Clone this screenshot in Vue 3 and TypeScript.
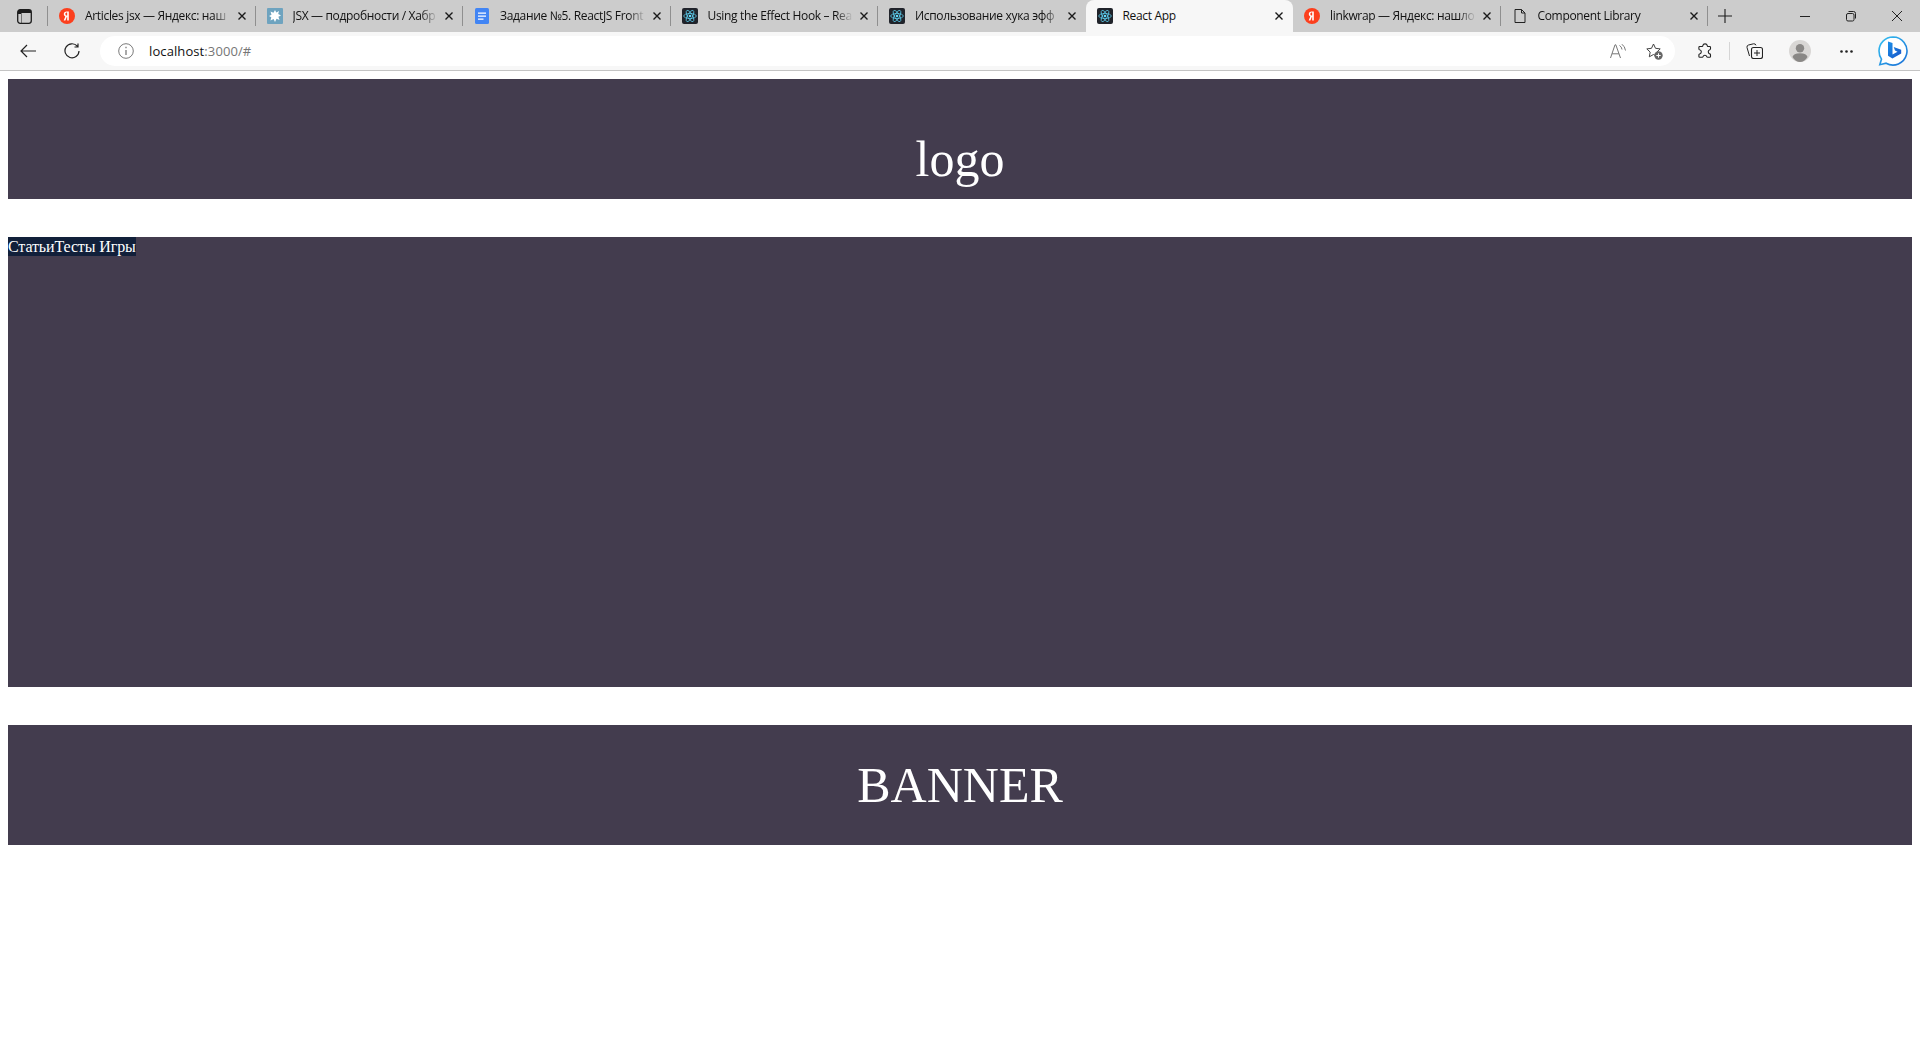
<template>
  <div class="browser">
    <div class="tabstrip">
      <button class="tab-actions" aria-label="tabs">
        <svg width="15" height="15" viewBox="0 0 15 15"><rect x=".7" y=".7" width="13.600" height="13.600" rx="2.500" fill="none" stroke="#1c1c1c" stroke-width="1.300" /><path d="M1 1h13v3H1zM1 4h3.500v10H4V5H1z" fill="#1c1c1c" /></svg>
      </button>
      <div
        v-for="tab in tabs"
        :key="tab.title"
        class="tab"
        :class="{ active: tab.active, 'no-sep': tab.noSep }"
      >
        <svg v-if="tab.icon === 'ya'" class="fav" viewBox="0 0 16 16"><circle cx="8" cy="8" r="8" fill="#fc3f1d" /><path d="M9 3.400H7.700C5.900 3.400 4.800 4.500 4.800 6c0 1.200.5 1.900 1.500 2.500L4.700 12.600h1.700l1.500-3.900h.3v3.900H9.800V3.400zM8.200 7.500h-.4C6.900 7.500 6.400 7 6.400 6c0-1 .5-1.500 1.400-1.500h.4z" fill="#fff" /></svg>
        <svg v-else-if="tab.icon === 'habr'" class="fav" viewBox="0 0 16 16"><rect width="16" height="16" rx="1" fill="#6ea3bf" /><path d="M8 2l1.300 2.600L12 3l-.8 3L14 7.600l-2.600 1.200L12.500 12 9.500 10.800 8 14l-1.400-3L3.500 12.500l.8-3.300L2 8l2.500-1.300L3.500 3.500l3 1.200z" fill="#fff" /></svg>
        <svg v-else-if="tab.icon === 'doc'" class="fav" viewBox="0 0 16 16"><rect x="1" width="14" height="16" rx="1.500" fill="#4285f4" /><path d="M4 4.500h8v1.300H4zM4 7.500h8v1.300H4zM4 10.500h5.500v1.300H4z" fill="#fff" /></svg>
        <svg v-else-if="tab.icon === 'react'" class="fav" viewBox="0 0 16 16">
          <rect width="16" height="16" rx="2" fill="#20232a" />
          <circle cx="8" cy="8" r="1.300" fill="#61dafb" />
          <g fill="none" stroke="#61dafb" stroke-width=".7">
            <ellipse cx="8" cy="8" rx="6.300" ry="2.500" />
            <ellipse cx="8" cy="8" rx="6.300" ry="2.500" transform="rotate(60 8 8)" />
            <ellipse cx="8" cy="8" rx="6.300" ry="2.500" transform="rotate(120 8 8)" />
          </g>
        </svg>
        <svg v-else class="fav" viewBox="0 0 16 16"><path d="M3 1.500h6.500L13 5v9.500H3z M9.500 1.500V5H13" fill="none" stroke="#222" stroke-width="1" /></svg>
        <span class="tab-title">{{ tab.title }}</span>
        <svg class="tab-close" width="10" height="10" viewBox="0 0 10 10"><path d="M1.500 1.500l7 7M8.500 1.500l-7 7" stroke="#1a1a1a" stroke-width="1.400" /></svg>
      </div>
      <div class="new-tab">
        <svg width="14" height="14" viewBox="0 0 14 14"><path d="M7 0v14M0 7h14" stroke="#1c1c1c" stroke-width="1.100" /></svg>
      </div>
      <div class="window-buttons">
        <svg width="46" height="32" viewBox="0 0 46 32"><path d="M18 16.500h10" stroke="#222" /></svg>
        <svg width="46" height="32" viewBox="0 0 46 32"><rect x="18.500" y="13.500" width="7.500" height="7.500" rx="1.500" fill="none" stroke="#222" /><path d="M20.500 11.500h5q2 0 2 2v5" fill="none" stroke="#222" /></svg>
        <svg width="46" height="32" viewBox="0 0 46 32"><path d="M18 11l10 10M28 11l-10 10" stroke="#222" /></svg>
      </div>
    </div>

    <div class="toolbar">
      <svg class="back" width="16" height="14" viewBox="0 0 16 14"><path d="M16 7H1M7 1L1 7l6 6" fill="none" stroke="#222" stroke-width="1.200" /></svg>
      <svg class="reload" width="16" height="16" viewBox="0 0 16 16"><path d="M13.300 3.200A7 7 0 1 0 15 8M14 .5v3.500h-3.500" fill="none" stroke="#222" stroke-width="1.200" /></svg>
      <div class="address">
        <svg width="16" height="16" viewBox="0 0 16 16"><circle cx="8" cy="8" r="7.300" fill="none" stroke="#7a7a7a" /><path d="M8 7v5M8 3.800v1.500" stroke="#7a7a7a" stroke-width="1.300" /></svg>
        <span class="url">localhost<span class="url-dim">:3000/#</span></span>
        <svg class="addr-end" width="16" height="14" viewBox="0 0 16 14"><path d="M.5 14L5 .8h.8L10.500 14M2 9.800h7" fill="none" stroke="#777" /><path d="M9.500 1.500q2.300 1.300 2.500 4M11.500 0q3.500 2 4 6.500" fill="none" stroke="#777" /></svg>
        <svg class="addr-star" width="17" height="17" viewBox="0 0 17 17"><path d="M7.500 1l2 4.300 4.700.6-3.400 3.200.9 4.700-4.200-2.300-4.200 2.300.9-4.700L.8 5.900l4.700-.6z" fill="none" stroke="#444" stroke-linejoin="round" /><circle cx="12.500" cy="12.500" r="4.200" fill="#666" /><path d="M12.500 10.300v4.400M10.300 12.500h4.400" stroke="#fff" /></svg>
      </div>
      <svg class="puzzle" width="16" height="16" viewBox="0 0 16 16"><path d="M5.800 2.700a2.300 2.300 0 0 1 4.500 0c0 .5.200.8.700.8h1.700q.8 0 .8.800v1.500c0 .5-.4.700-.7.900a2.200 2.200 0 0 0 0 4.200c.4.100.7.400.7.800v1.700q0 .9-.9.900h-2c-.5 0-.7-.3-.8-.7a2 2 0 0 0-3.800 0c-.1.400-.4.700-.8.700H2.800q-.9 0-.9-.9v-1.600c0-.5.300-.7.700-.8a2.200 2.200 0 0 0 0-4.300c-.4-.1-.7-.4-.7-.8V4.300q0-.8.800-.8H5c.5 0 .8-.3.800-.8z" fill="none" stroke="#222" stroke-width="1.100" /></svg>
      <span class="tool-sep"></span>
      <svg class="coll" width="17" height="16" viewBox="0 0 17 16"><path d="M3.500 13L1 4.500Q.6 2.500 2.500 2L7.500.8q2-.3 2.500 1.500" fill="none" stroke="#222" /><rect x="5.500" y="4.500" width="11" height="11" rx="2" fill="none" stroke="#222" stroke-width="1.100" /><path d="M11 7v6M8 10h6" stroke="#222" /></svg>
      <svg class="avatar" width="22" height="22" viewBox="0 0 22 22"><circle cx="11" cy="11" r="11" fill="#d9d7d5" /><circle cx="11" cy="8.300" r="4.200" fill="#8a8886" /><path d="M3.500 17q.8-3.800 7.500-3.800t7.500 3.800q-3 5-7.500 5t-7.500-5z" fill="#8a8886" /></svg>
      <svg class="dots" width="13" height="3" viewBox="0 0 13 3"><circle cx="1.500" cy="1.500" r="1.300" fill="#222" /><circle cx="6.500" cy="1.500" r="1.300" fill="#222" /><circle cx="11.500" cy="1.500" r="1.300" fill="#222" /></svg>
      <svg class="bing" width="30" height="30" viewBox="0 0 30 30">
        <defs>
          <linearGradient id="bingRing" x1="0" y1="0" x2="1" y2="1"><stop offset="0" stop-color="#35c1f1" /><stop offset="1" stop-color="#1b6fd6" /></linearGradient>
          <linearGradient id="bingB" x1="0" y1="0" x2="1" y2="1"><stop offset="0" stop-color="#1a8fe8" /><stop offset="1" stop-color="#1a55c8" /></linearGradient>
        </defs>
        <path d="M15 1C7.200 1 1 7.200 1 15c0 3 .9 5.800 2.500 8.100L1.800 28.700l6.300-1.500A14 14 0 1 0 15 1z" fill="#fff" stroke="url(#bingRing)" stroke-width="1.600" />
        <path d="M10 5.500l4.500 1.500v11.500l5-2.800-2.500-1.300-1.300-3.400 7.500 2.700v3.700l-8.800 5.100L10 19.800z" fill="url(#bingB)" />
      </svg>
    </div>

    <main class="page">
      <header class="block logo-block">logo</header>
      <section class="block content-block">
        <nav class="nav-links"><a href="#">Статьи</a><a href="#">Тесты </a><a href="#">Игры</a></nav>
      </section>
      <footer class="block banner-block">BANNER</footer>
    </main>
  </div>
</template>

<script setup lang="ts">
interface Tab {
  title: string
  icon: 'ya' | 'habr' | 'doc' | 'react' | 'file'
  active?: boolean
  noSep?: boolean
}

const tabs: Tab[] = [
  { title: 'Articles jsx — Яндекс: наш', icon: 'ya' },
  { title: 'JSX — подробности / Хабр', icon: 'habr' },
  { title: 'Задание №5. ReactJS Front', icon: 'doc' },
  { title: 'Using the Effect Hook – Rea', icon: 'react' },
  { title: 'Использование хука эфф', icon: 'react' },
  { title: 'React App', icon: 'react', active: true, noSep: true },
  { title: 'linkwrap — Яндекс: нашло', icon: 'ya', noSep: true },
  { title: 'Component Library', icon: 'file' },
]
</script>

<style>
html,
body {
  margin: 0;
  background: #fff;
}
</style>

<style scoped>
.browser {
  min-height: 100vh;
  background: #fff;
  font-family: 'Open Sans', 'Noto Sans', sans-serif;
}
.tabstrip {
  height: 32px;
  display: flex;
  align-items: flex-end;
  background: #cccccc;
}
.tab-actions {
  width: 48px;
  height: 32px;
  padding: 0 0 0 17px;
  margin: 0;
  border: 0;
  background: none;
  display: flex;
  align-items: center;
  justify-content: flex-start;
}
.tab {
  width: 207.500px;
  height: 32px;
  flex: none;
  box-sizing: border-box;
  padding: 0 9px 1px 11px;
  display: flex;
  align-items: center;
  position: relative;
}
/* short divider between inactive tabs */
.tab::before,
.new-tab::before {
  content: '';
  position: absolute;
  left: -1px;
  top: 6px;
  width: 1px;
  height: 20px;
  background: #8f8f8f;
}
.tab.no-sep::before {
  display: none;
}
.tab.active {
  background: #f7f7f7;
  border-radius: 8px 8px 0 0;
}
.fav {
  width: 16px;
  height: 16px;
  flex: none;
}
.tab-title {
  flex: 1;
  min-width: 0;
  margin: 0 6px 0 10px;
  font-size: 12px;
  letter-spacing: -0.33px;
  color: #111;
  white-space: nowrap;
  overflow: hidden;
  -webkit-mask-image: linear-gradient(90deg, #000 88%, transparent 100%);
  mask-image: linear-gradient(90deg, #000 88%, transparent 100%);
}
.active .tab-title {
  -webkit-mask-image: none;
  mask-image: none;
}
.tab-close {
  flex: none;
}
.new-tab {
  width: 36px;
  height: 32px;
  box-sizing: border-box;
  padding-left: 10px;
  display: flex;
  align-items: center;
  position: relative;
}
.window-buttons {
  margin-left: auto;
  height: 32px;
  display: flex;
}
.window-buttons svg {
  display: block;
}
.toolbar {
  height: 38px;
  display: flex;
  align-items: center;
  background: #f7f7f7;
  border-bottom: 1px solid #c4c4c4;
}
.back {
  margin-left: 20px;
}
.reload {
  margin-left: 28px;
}
.address {
  width: 1575px;
  height: 30px;
  margin-left: 20px;
  box-sizing: border-box;
  padding: 0 12px 0 18px;
  display: flex;
  align-items: center;
  background: #fff;
  border-radius: 15px;
}
.url {
  margin-left: 15px;
  font-size: 13px;
  letter-spacing: 0.1px;
  color: #111;
}
.url-dim {
  color: #767676;
}
.addr-end {
  margin-left: auto;
}
.addr-star {
  margin-left: 20px;
}
.puzzle {
  margin-left: 22px;
}
.tool-sep {
  width: 1px;
  height: 18px;
  margin-left: 16px;
  background: #d5d5d5;
}
.coll {
  margin-left: 16px;
}
.avatar {
  margin-left: 26px;
}
.dots {
  margin-left: 29px;
}
.bing {
  margin-left: 25px;
}
.page {
  padding: 8px;
  display: flex;
  flex-direction: column;
  gap: 38px;
}
.block {
  background: #433c4e;
  color: #fff;
  font-family: 'Liberation Serif', 'Times New Roman', serif;
}
.logo-block,
.banner-block {
  height: 120px;
  display: flex;
  justify-content: center;
  font-size: 50px;
}
.logo-block {
  align-items: flex-end;
  padding-bottom: 11px;
  box-sizing: border-box;
}
.banner-block {
  align-items: center;
}
.content-block {
  height: 450px;
  font-size: 16px;
}
.nav-links {
  display: flex;
  width: fit-content;
  height: 19px;
  line-height: 19px;
  white-space: pre;
  letter-spacing: -0.12px;
  background: #12203a;
}
.nav-links a {
  color: #fff;
  text-decoration: none;
}
</style>
